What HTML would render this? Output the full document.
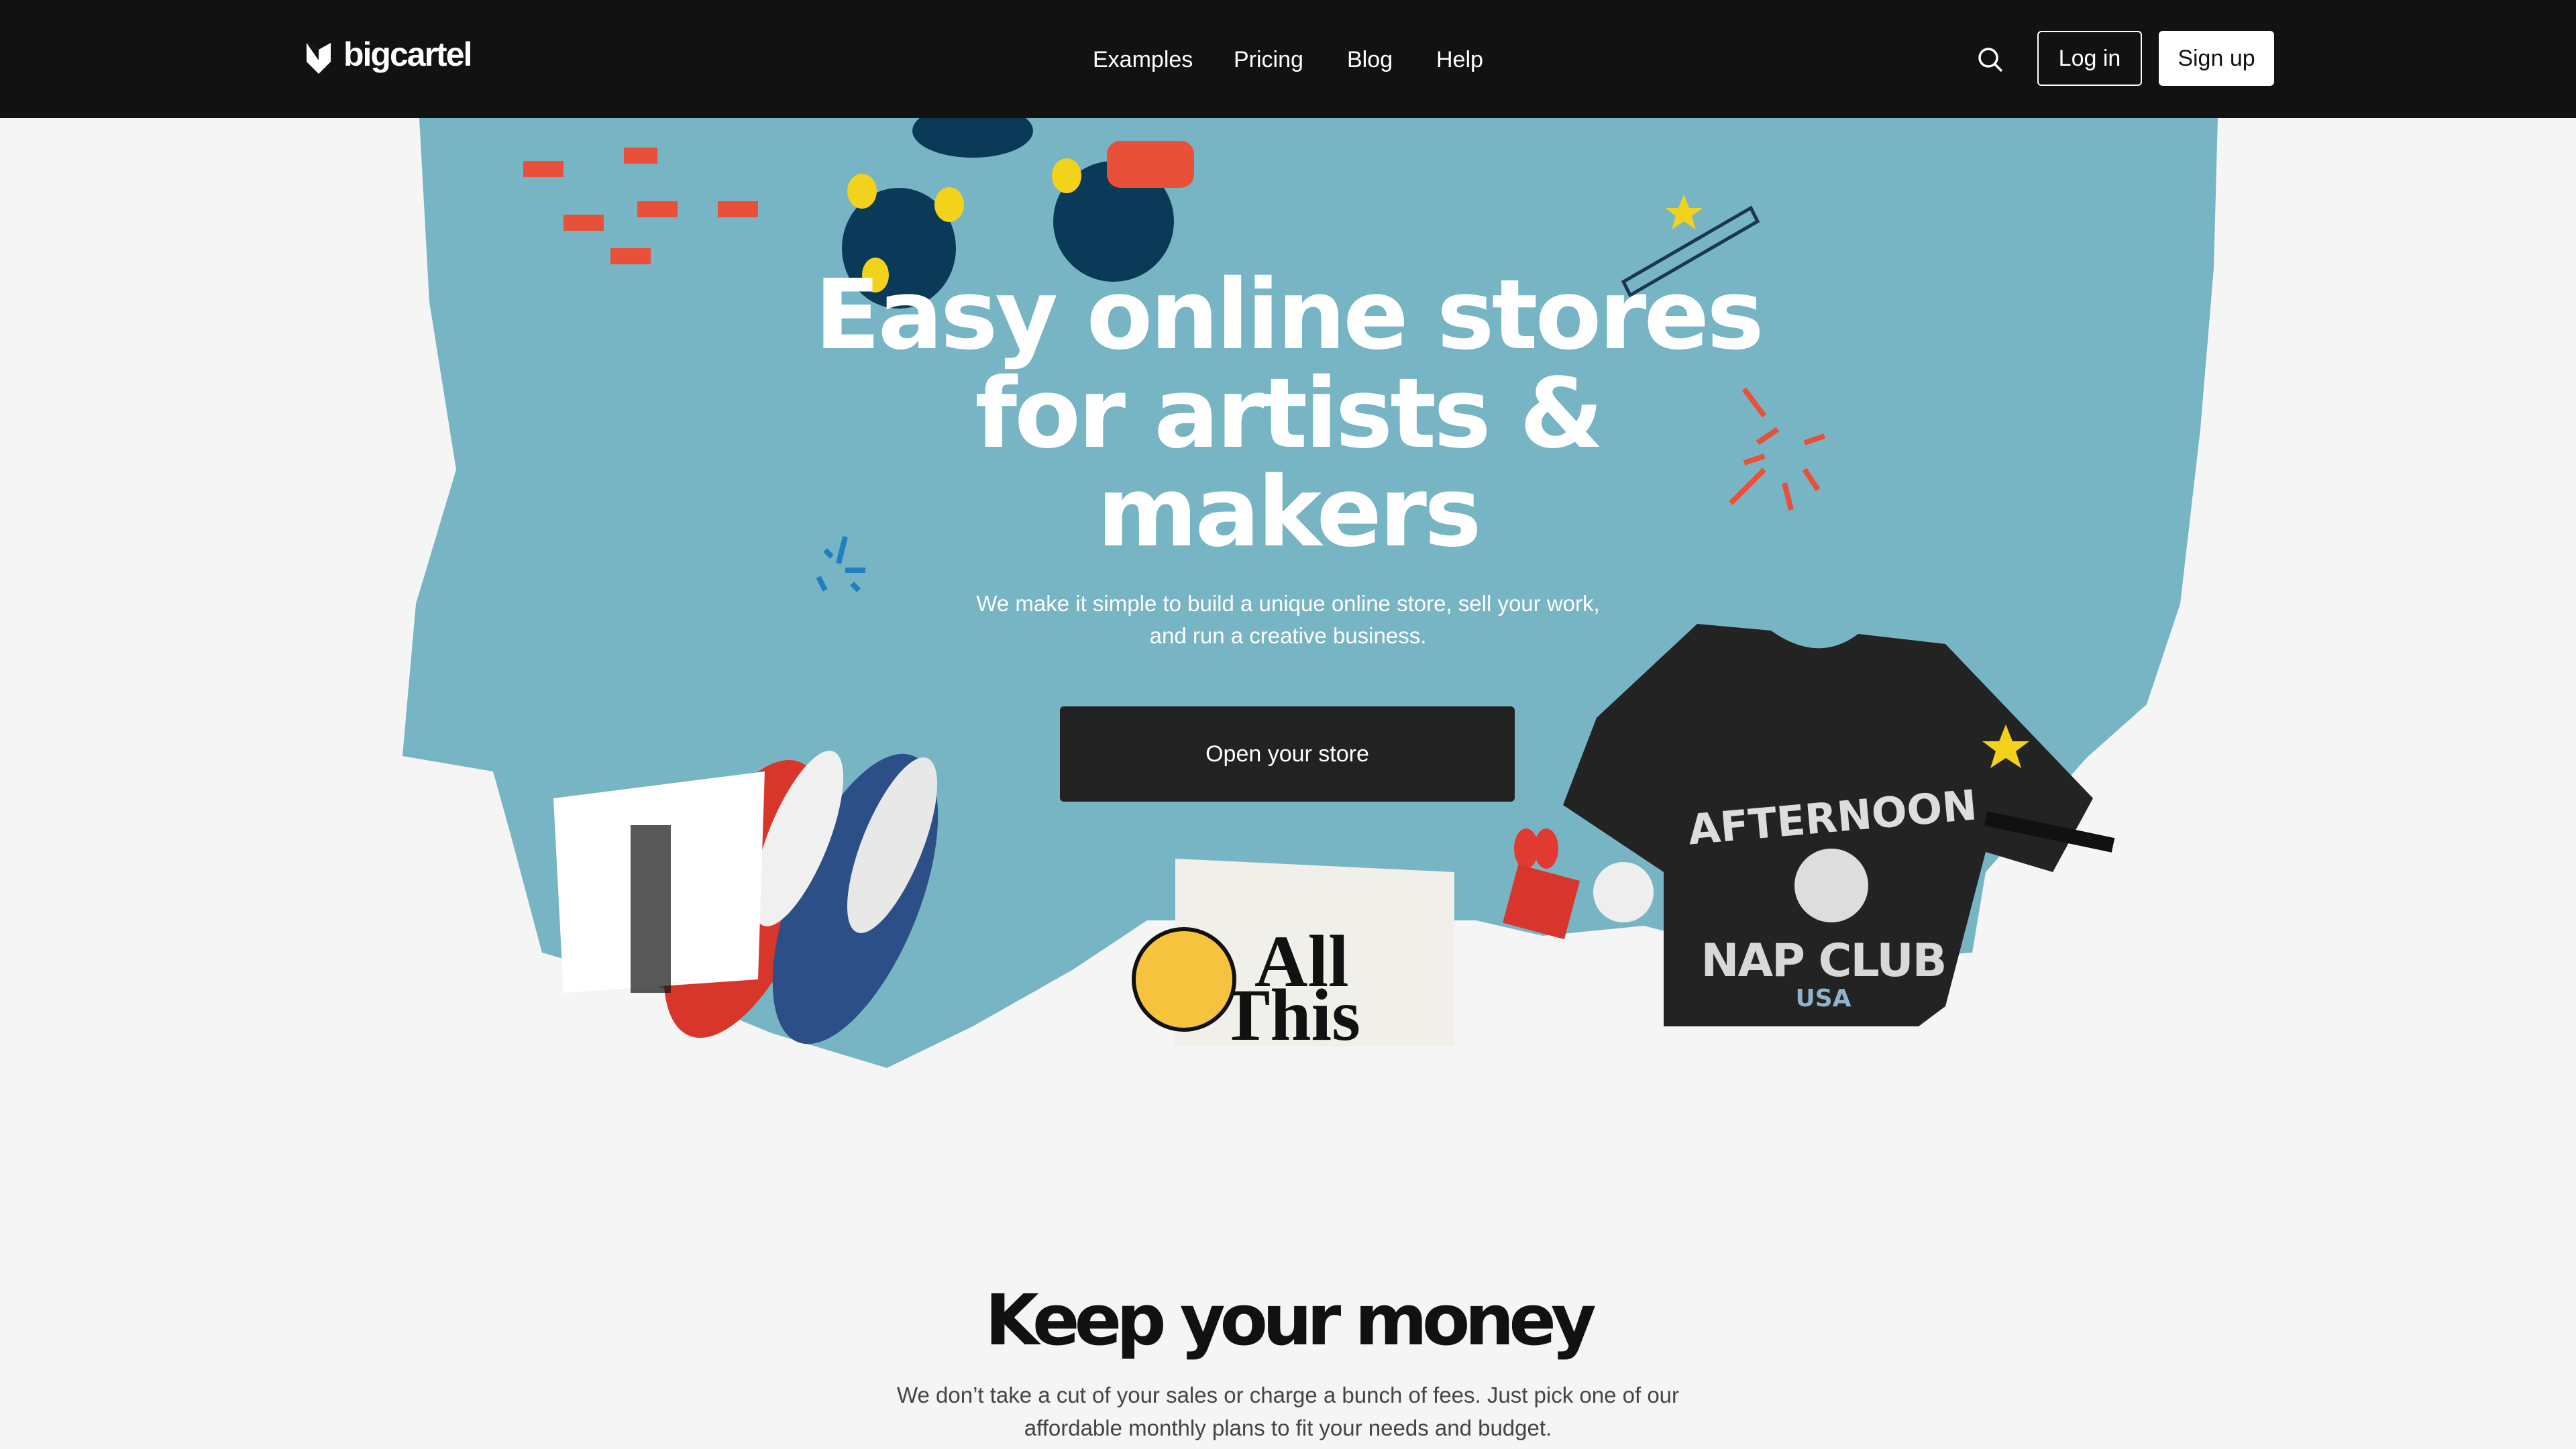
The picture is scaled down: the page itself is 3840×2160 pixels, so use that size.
<!DOCTYPE html>
<html><head><meta charset="utf-8"><style>
*{margin:0;padding:0;box-sizing:border-box}
body{width:3840px;height:2160px;background:#f5f5f5;overflow:hidden;position:relative;font-family:"Liberation Sans",sans-serif}
nav{position:absolute;left:0;top:0;width:3840px;height:176px;background:#121212;z-index:5}
.logo{position:absolute;left:512px;top:52px;color:#fff;font:bold 50px "Liberation Sans",sans-serif;letter-spacing:-2px}
.links{position:absolute;top:70px;font-size:34px;color:#fff}
.links span{position:absolute;white-space:nowrap}
.btn{position:absolute;top:46px;height:82px;border:2px solid #fff;border-radius:6px;color:#fff;font-size:34px;line-height:78px;text-align:center}
svg.bg{position:absolute;left:0;top:0}
h1{position:absolute;left:0;width:3840px;top:396px;text-align:center;color:#fff;font:bold 144px/147px "DejaVu Sans",sans-serif;letter-spacing:-4px}
.sub{position:absolute;left:0;width:3840px;top:876px;text-align:center;color:#fff;font-size:33px;line-height:48px}
.cta{position:absolute;left:1580px;top:1053px;width:678px;height:142px;background:#222;border-radius:6px;color:#fff;font-size:34px;line-height:142px;text-align:center}
h2{position:absolute;left:0;width:3840px;top:1906px;text-align:center;color:#111;font:bold 104px/124px "DejaVu Sans",sans-serif;letter-spacing:-8px}
.p2{position:absolute;left:0;width:3840px;top:2055px;text-align:center;color:#444;font-size:33px;line-height:49px}
</style></head><body>
<svg class="bg" width="3840" height="2160" viewBox="0 0 3840 2160">
<path d="M625 176 L3306 176 L3300 400 L3280 640 L3250 900 L3200 1050 L3110 1130 L2960 1300 L2940 1420 L2690 1440 L2450 1380 L2300 1395 L2200 1372 L1710 1372 L1600 1445 L1450 1530 L1322 1592 L1150 1540 L980 1470 L808 1420 L760 1240 L735 1150 L600 1127 L620 900 L680 700 L640 450 L625 176Z" fill="#77b5c5"/>
<g fill="#0a3a58"><ellipse cx="1340" cy="370" rx="85" ry="90"/><ellipse cx="1660" cy="330" rx="90" ry="90"/><ellipse cx="1450" cy="195" rx="90" ry="40"/></g>
<g fill="#e8503a"><rect x="1650" y="210" width="130" height="70" rx="20"/><rect x="780" y="240" width="60" height="24"/><rect x="840" y="320" width="60" height="24"/><rect x="950" y="300" width="60" height="24"/><rect x="1070" y="300" width="60" height="24"/><rect x="910" y="370" width="60" height="24"/><rect x="930" y="220" width="50" height="24"/></g>
<g fill="#f2d21a"><ellipse cx="1285" cy="285" rx="22" ry="26"/><ellipse cx="1415" cy="305" rx="22" ry="26"/><ellipse cx="1590" cy="262" rx="22" ry="26"/><ellipse cx="1305" cy="410" rx="20" ry="26"/></g>
<g stroke="#e8503a" stroke-width="8" fill="none"><path d="M2630 620 L2600 580 M2630 700 L2580 750 M2660 720 L2670 760 M2630 680 L2600 690 M2650 640 L2620 660 M2720 650 L2690 660 M2690 700 L2710 730"/></g>
<g stroke="#1f7fc0" stroke-width="8"><path d="M1260 800 L1250 840 M1230 820 L1240 830 M1230 880 L1220 860 M1270 870 L1280 880 M1260 850 L1290 850"/></g>
<ellipse cx="1110" cy="1340" rx="95" ry="220" transform="rotate(22 1110 1340)" fill="#d9362b"/>
<ellipse cx="1275" cy="1340" rx="95" ry="230" transform="rotate(22 1275 1340)" fill="#2d4f88"/>
<ellipse cx="1190" cy="1250" rx="45" ry="140" transform="rotate(22 1190 1250)" fill="#f0f0f0"/>
<ellipse cx="1330" cy="1260" rx="45" ry="140" transform="rotate(22 1330 1260)" fill="#e8e8e8"/>
<polygon points="825,1190 1140,1150 1130,1460 840,1480" fill="#fff"/>
<rect x="940" y="1230" width="60" height="250" fill="#111" opacity=".7"/>
<polygon points="1752,1280 2168,1300 2168,1560 1752,1560" fill="#f1efe9"/>
<text x="1870" y="1470" font-family="Liberation Serif" font-weight="bold" font-size="110" fill="#111">All</text>
<text x="1820" y="1550" font-family="Liberation Serif" font-weight="bold" font-size="110" fill="#111">This</text>
<circle cx="1765" cy="1460" r="75" fill="#f5c33e" stroke="#111" stroke-width="6"/>
<path d="M2530 930 L2640 940 Q2710 990 2770 945 L2900 960 L3120 1190 L3060 1300 L2960 1270 L2900 1500 L2860 1530 L2480 1530 L2480 1300 L2420 1260 L2330 1200 L2380 1070Z" fill="#232323"/>
<text x="2718" y="1455" text-anchor="middle" font-family="DejaVu Sans" font-weight="bold" font-size="68" fill="#d8d8d8" letter-spacing="-2">NAP CLUB</text>
<text x="2730" y="1240" text-anchor="middle" font-family="DejaVu Sans" font-weight="bold" font-size="62" fill="#ddd" transform="rotate(-5 2730 1200)">AFTERNOON</text>
<text x="2718" y="1500" text-anchor="middle" font-family="DejaVu Sans" font-weight="bold" font-size="36" fill="#8fb3cc">USA</text>
<circle cx="2730" cy="1320" r="55" fill="#ddd"/>
<g fill="#e23a30"><ellipse cx="2275" cy="1265" rx="18" ry="30"/><ellipse cx="2305" cy="1265" rx="18" ry="30"/></g>
<rect x="2250" y="1300" width="95" height="90" fill="#d8352c" transform="rotate(15 2300 1345)"/>
<circle cx="2420" cy="1330" r="45" fill="#eee"/>
<g fill="#f2d21a"><path d="M2990 1080 l10 25 25 0 -20 15 8 25 -23 -15 -23 15 8 -25 -20 -15 25 0z"/><path d="M2510 290 l8 20 20 0 -16 12 6 20 -18 -12 -18 12 6 -20 -16 -12 20 0z"/></g>
<path d="M2420 420 L2610 310 L2620 330 L2430 440Z" fill="none" stroke="#1c3550" stroke-width="5"/>
<path d="M2960 1220 L3150 1260" stroke="#111" stroke-width="22"/>
</svg>
<nav>
<svg style="position:absolute;left:455px;top:62px" width="40" height="50" viewBox="0 0 40 50"><path d="M2 2 L20 12 L38 2 L38 30 L20 48 L2 30Z" fill="#fff"/><path d="M2 2 L20 12 L20 28Z" fill="#121212"/></svg>
<div class="logo">bigcartel</div>
<div class="links"><span style="left:1629px">Examples</span><span style="left:1839px">Pricing</span><span style="left:2008px">Blog</span><span style="left:2141px">Help</span></div>
<svg style="position:absolute;left:2946px;top:68px" width="42" height="42" viewBox="0 0 42 42"><circle cx="18" cy="18" r="13" fill="none" stroke="#fff" stroke-width="3.5"/><path d="M28 28 L38 38" stroke="#fff" stroke-width="3.5"/></svg>
<div class="btn" style="left:3037px;width:156px">Log in</div>
<div class="btn" style="left:3218px;width:172px;background:#fff;color:#111">Sign up</div>
</nav>
<h1>Easy online stores<br>for artists &amp;<br>makers</h1>
<div class="sub">We make it simple to build a unique online store, sell your work,<br>and run a creative business.</div>
<div class="cta">Open your store</div>
<h2>Keep your money</h2>
<div class="p2">We don’t take a cut of your sales or charge a bunch of fees. Just pick one of our<br>affordable monthly plans to fit your needs and budget.</div>
</body></html>
